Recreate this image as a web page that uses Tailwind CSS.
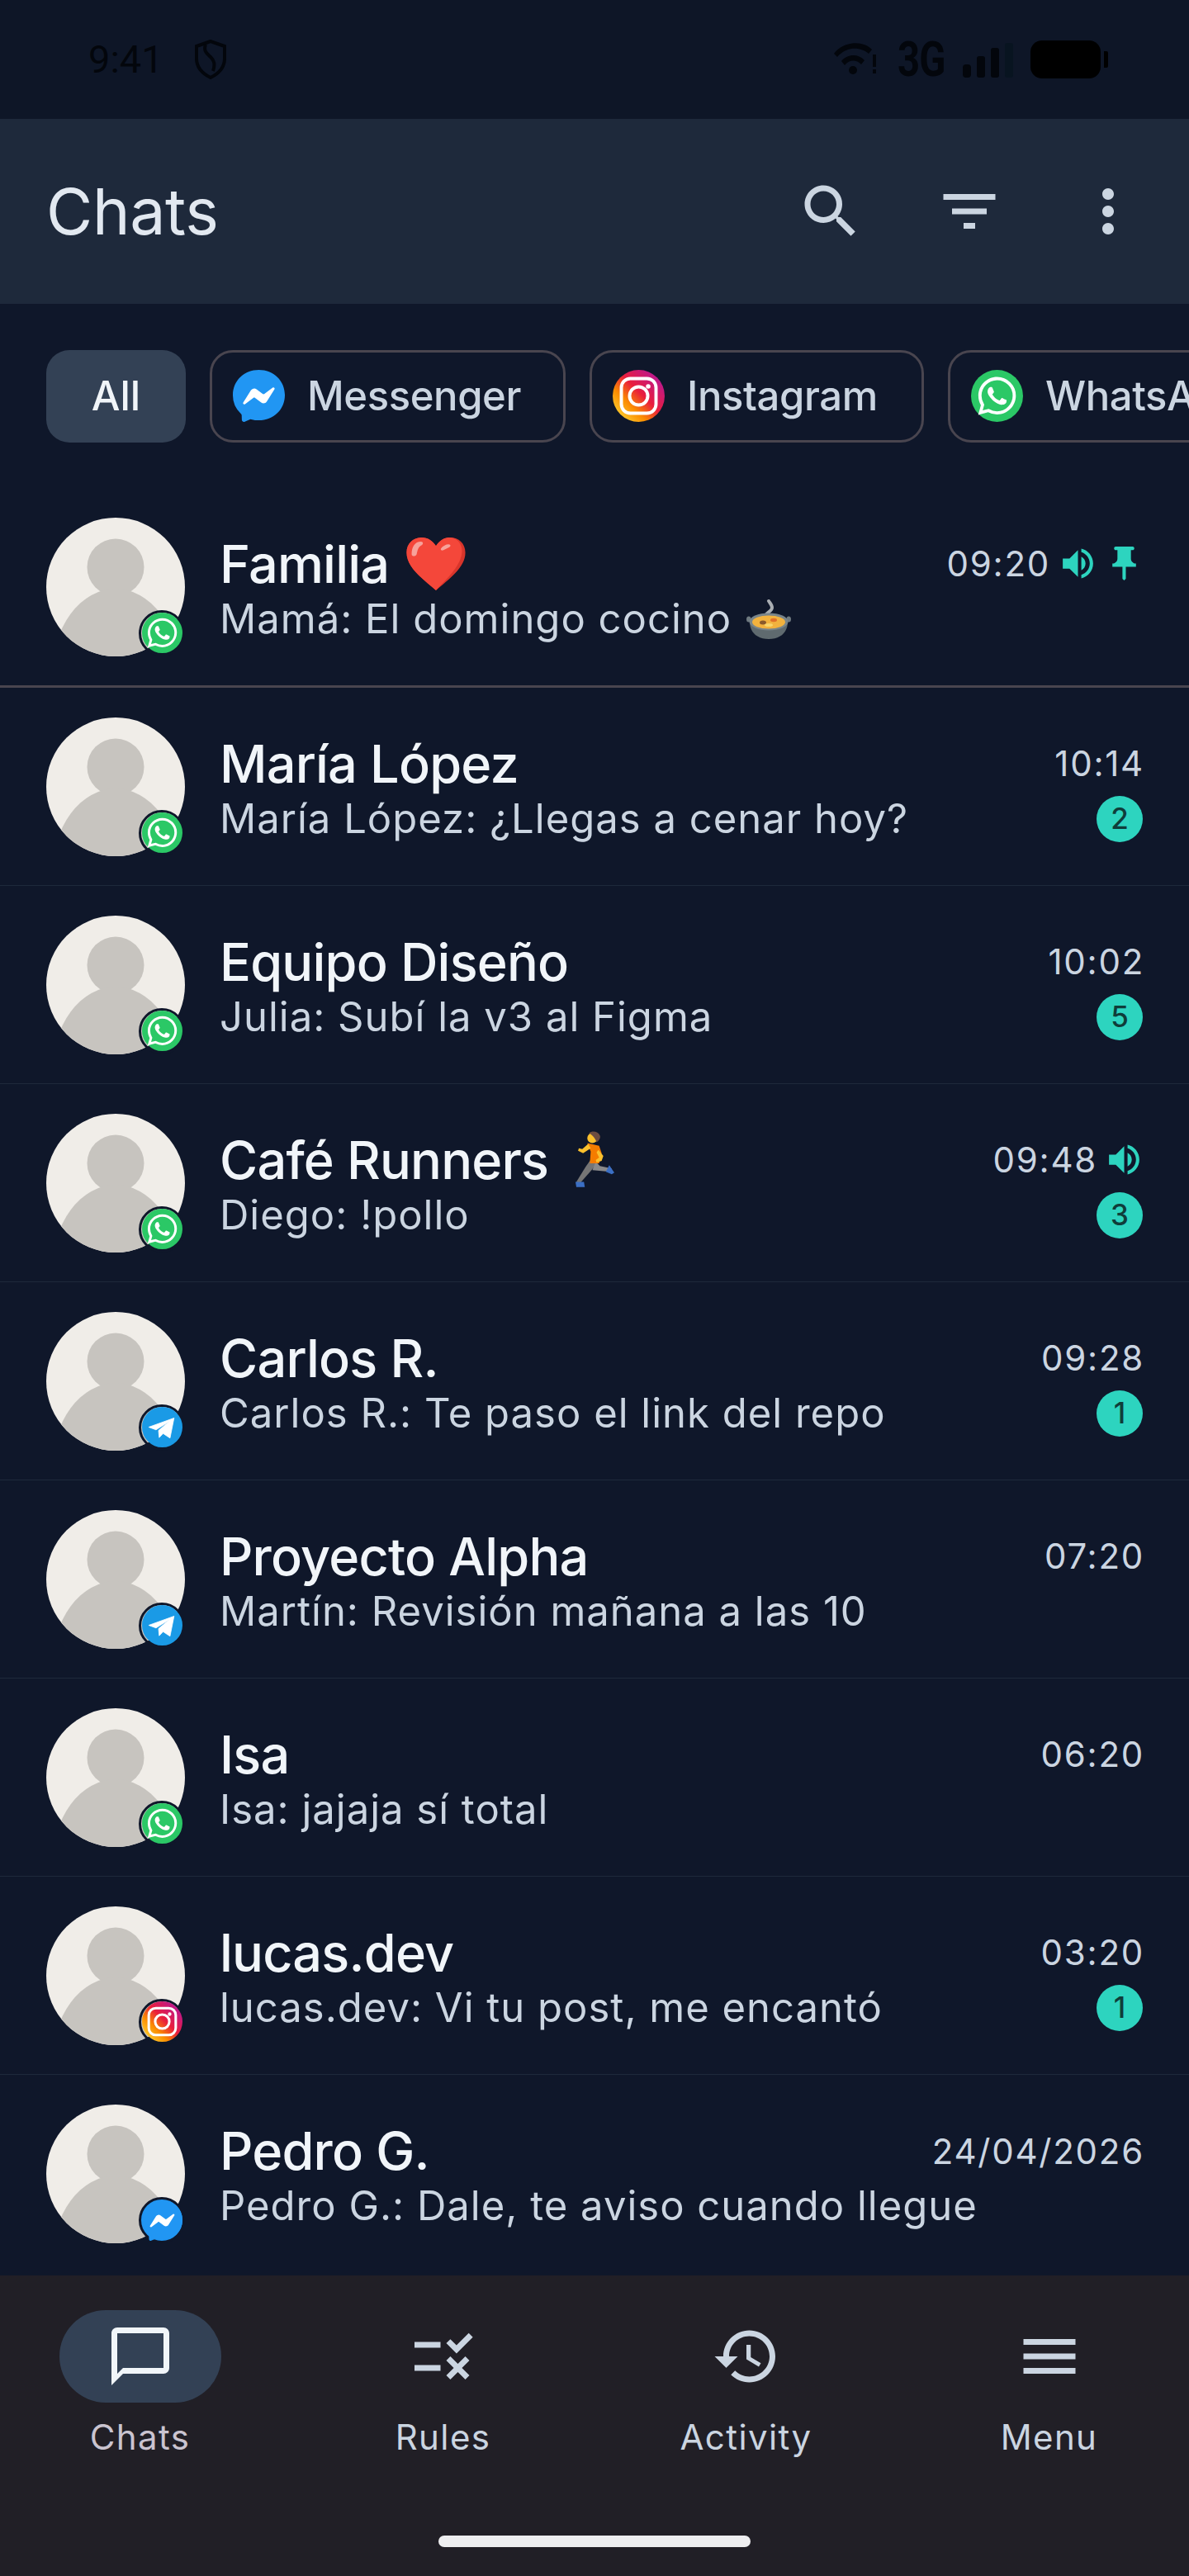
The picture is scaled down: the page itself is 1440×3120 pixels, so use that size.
<!DOCTYPE html>
<html>
<head>
<meta charset="utf-8">
<script src="https://cdn.jsdelivr.net/npm/@tailwindcss/browser@4"></script>
</head>
<body class="bg-[#0f172a] font-['Inter',sans-serif]">
<svg width="0" height="0" class="absolute">
  <defs>
    <linearGradient id="ig" x1="0.1" y1="0.95" x2="0.95" y2="0.1">
      <stop offset="0" stop-color="#fdd835"/><stop offset="0.3" stop-color="#fb8c00"/><stop offset="0.55" stop-color="#e91e3c"/><stop offset="1" stop-color="#b5179e"/>
    </linearGradient>
    <symbol id="wa" viewBox="-4.5 -4.5 33 33"><circle cx="12" cy="12" r="16.5" fill="#2bc866"/><path fill="#fff" d="M17.472 14.382c-.297-.149-1.758-.867-2.03-.967-.273-.099-.471-.148-.67.15-.197.297-.767.966-.94 1.164-.173.199-.347.223-.644.075-.297-.15-1.255-.463-2.39-1.475-.883-.788-1.48-1.761-1.653-2.059-.173-.297-.018-.458.13-.606.134-.133.298-.347.446-.52.149-.174.198-.298.298-.497.099-.198.05-.371-.025-.52-.075-.149-.669-1.612-.916-2.207-.242-.579-.487-.5-.669-.51-.173-.008-.371-.01-.57-.01-.198 0-.52.074-.792.372-.272.297-1.04 1.016-1.04 2.479 0 1.462 1.065 2.875 1.213 3.074.149.198 2.096 3.2 5.077 4.487.709.306 1.262.489 1.694.625.712.227 1.36.195 1.871.118.571-.085 1.758-.719 2.006-1.413.248-.694.248-1.289.173-1.413-.074-.124-.272-.198-.57-.347m-5.421 7.403h-.004a9.87 9.87 0 01-5.031-1.378l-.361-.214-3.741.982.998-3.648-.235-.374a9.86 9.86 0 01-1.51-5.26c.001-5.45 4.436-9.884 9.888-9.884 2.64 0 5.122 1.03 6.988 2.898a9.825 9.825 0 012.893 6.994c-.003 5.45-4.437 9.884-9.885 9.884m8.413-18.297A11.815 11.815 0 0012.05 0C5.495 0 .16 5.335.157 11.892c0 2.096.547 4.142 1.588 5.945L.057 24l6.305-1.654a11.882 11.882 0 005.683 1.448h.005c6.554 0 11.89-5.335 11.893-11.893a11.821 11.821 0 00-3.48-8.413Z"/></symbol>
    <symbol id="tg" viewBox="0 0 24 24"><circle cx="12" cy="12" r="12" fill="#1a9ae6"/><path fill="#fff" stroke="#fff" stroke-width=".4" stroke-linejoin="round" d="M4 12 19 6.6 16.6 18.5 12.5 15.8 10.2 18.2 9.8 14 16.5 8.5 8.3 13.6z"/></symbol>
    <symbol id="ms" viewBox="0 0 24 24"><path fill="#2196f3" d="M.001 11.639C.001 4.949 5.241 0 12.001 0S24 4.95 24 11.639c0 6.689-5.24 11.638-12 11.638-1.21 0-2.38-.16-3.47-.46a.96.96 0 00-.64.05l-2.39 1.05a.96.96 0 01-1.35-.85l-.07-2.14a.97.97 0 00-.32-.68A11.39 11.389 0 01.002 11.64z"/><path fill="#fff" d="M8.321 9.449l-3.52 5.6c-.35.53.32 1.139.82.75l3.79-2.87c.26-.2.6-.2.87 0l2.8 2.1c.84.63 2.04.4 2.6-.48l3.52-5.6c.35-.53-.32-1.13-.82-.75l-3.79 2.87c-.25.2-.6.2-.86 0l-2.8-2.1a1.8 1.8 0 00-2.61.48z"/></symbol>
    <symbol id="igc" viewBox="0 0 24 24"><circle cx="12" cy="12" r="12" fill="url(#ig)"/><rect x="4" y="4" width="16" height="16" rx="4.2" fill="none" stroke="#fff" stroke-width="1.5"/><circle cx="12" cy="12" r="4.2" fill="none" stroke="#fff" stroke-width="1.5"/><circle cx="16.4" cy="7.6" r="1.05" fill="#fff"/></symbol>
    <symbol id="avatar" viewBox="0 0 168 168"><circle cx="84" cy="84" r="84" fill="#f0ede8"/><clipPath id="avc"><circle cx="84" cy="84" r="84"/></clipPath><g clip-path="url(#avc)" fill="#c7c4bf"><circle cx="84" cy="60" r="34.5"/><ellipse cx="84" cy="190" rx="77" ry="104"/></g></symbol>
    <symbol id="vol" viewBox="0 0 24 24"><path fill="#2dd4bf" d="M3 9v6h4l5 5V4L7 9H3zm13.5 3c0-1.77-1.02-3.29-2.5-4.03v8.05c1.48-.73 2.5-2.25 2.5-4.02zM14 3.23v2.06c2.89.86 5 3.54 5 6.71s-2.11 5.85-5 6.71v2.06c4.01-.91 7-4.49 7-8.77s-2.99-7.86-7-8.77z"/></symbol>
  </defs>
</svg>

<div class="w-[1440px] h-[3120px] flex flex-col overflow-hidden">
  <!-- status bar -->
  <div class="h-[144px] bg-[#0e1627] flex items-start justify-between text-black relative">
    <div class="flex items-center gap-[37px] pl-[107px] pt-[48px]">
      <span class="font-['Roboto',sans-serif] text-[47px] leading-[48px] text-[#03060c]">9:41</span>
      <svg width="40" height="48" viewBox="0 0 40 48" fill="none" stroke="#03060c" stroke-width="4"><path d="M20 2 3 8v15c0 11 7 18 17 23 10-5 17-12 17-23V8z"/><path d="M14 6c-3 8 2 11 6 15 4 4 6 8 3 17"/></svg>
    </div>
    <div class="flex items-center pt-[49px] pr-[98px]">
      <svg width="54" height="40" viewBox="0 0 54 40" fill="#03060c"><path d="M0 13C12 -3 36 -3 46 8l-4 5C32 4 15 4 4 17z"/><path d="M9 22c8-9 20-9 28-1l-4 5c-6-6-14-6-20 1z"/><circle cx="23" cy="33" r="5"/><rect x="47" y="14" width="4" height="15"/><rect x="47" y="32" width="4" height="5"/></svg>
      <span class="ml-[23px] font-['Roboto',sans-serif] font-bold text-[59px] leading-[46px] tracking-[-1px] text-[#03060c] scale-x-[0.8] origin-left w-[60px] block">3G</span>
      <div class="ml-[19px] flex items-end gap-[7px] h-[44px]">
        <div class="w-[10px] h-[16px] bg-[#03060c] rounded-[4px]"></div>
        <div class="w-[10px] h-[26px] bg-[#03060c] rounded-[3px]"></div>
        <div class="w-[10px] h-[36px] bg-[#03060c] rounded-[3px]"></div>
        <div class="w-[10px] h-[42px] bg-[#081420] rounded-[3px]"></div>
      </div>
      <div class="ml-[21px] w-[85px] h-[46px] bg-black rounded-[14px]"></div>
      <div class="ml-[4px] w-[5px] h-[20px] bg-black rounded-r-[2px]"></div>
    </div>
  </div>

  <!-- app bar -->
  <div class="h-[224px] bg-[#1e293b] flex items-center justify-between pl-[56px] pr-[14px]">
    <h1 class="text-[77px] leading-none font-normal tracking-[-0.3px] text-[#e2e8f0]">Chats</h1>
    <div class="flex text-[#cbd5e1]">
      <div class="w-[168px] h-[168px] flex items-center justify-center"><svg width="84" height="84" viewBox="0 0 24 24" fill="currentColor"><path d="M15.5 14h-.79l-.28-.27C15.41 12.59 16 11.11 16 9.5 16 5.91 13.09 3 9.5 3S3 5.91 3 9.5 5.91 16 9.5 16c1.61 0 3.09-.59 4.23-1.57l.27.28v.79l5 4.99L20.49 19l-4.99-5zm-6 0C7.01 14 5 11.99 5 9.5S7.01 5 9.5 5 14 7.01 14 9.5 11.99 14 9.5 14z"/></svg></div>
      <div class="w-[168px] h-[168px] flex items-center justify-center"><svg width="84" height="84" viewBox="0 0 24 24" fill="currentColor"><path d="M10 18h4v-2h-4v2zM3 6v2h18V6H3zm3 7h12v-2H6v2z"/></svg></div>
      <div class="w-[168px] h-[168px] flex items-center justify-center"><svg width="84" height="84" viewBox="0 0 24 24" fill="currentColor"><path d="M12 8c1.1 0 2-.9 2-2s-.9-2-2-2-2 .9-2 2 .9 2 2 2zm0 2c-1.1 0-2 .9-2 2s.9 2 2 2 2-.9 2-2-.9-2-2-2zm0 6c-1.1 0-2 .9-2 2s.9 2 2 2 2-.9 2-2-.9-2-2-2z"/></svg></div>
    </div>
  </div>

  <!-- filter chips -->
  <div class="h-[223px] flex items-center gap-[29px] pl-[56px] overflow-hidden shrink-0">
    <div class="shrink-0 w-[169px] h-[112px] rounded-[28px] bg-[#334155] flex items-center justify-center text-[49px] text-[#f1f5f9] font-medium">All</div>
    <div class="shrink-0 w-[431px] h-[112px] rounded-[28px] border-[3.5px] border-[#49454f] flex items-center pl-[25px] gap-[27px] text-[49px] tracking-[-0.4px] font-medium text-[#cbd5e1]"><svg class="shrink-0" width="63" height="63"><use href="#ms"/></svg><span>Messenger</span></div>
    <div class="shrink-0 w-[405px] h-[112px] rounded-[28px] border-[3.5px] border-[#49454f] flex items-center pl-[25px] gap-[27px] text-[49px] tracking-[-0.4px] font-medium text-[#cbd5e1]"><svg class="shrink-0" width="63" height="63"><use href="#igc"/></svg><span>Instagram</span></div>
    <div class="shrink-0 w-[430px] h-[112px] rounded-[28px] border-[3.5px] border-[#49454f] flex items-center pl-[25px] gap-[27px] text-[49px] tracking-[-0.4px] font-medium text-[#cbd5e1]"><svg class="shrink-0" width="63" height="63"><use href="#wa"/></svg><span>WhatsApp</span></div>
  </div>

  <!-- list -->
  <div class="flex-1 overflow-hidden">
    <!-- row 1 -->
    <div class="h-[242px] border-b-[3px] border-[#49454f] flex items-center px-[56px] gap-[42px]">
      <div class="relative w-[168px] h-[168px] shrink-0"><svg width="168" height="168"><use href="#avatar"/></svg><div class="absolute right-0 bottom-0 w-[56px] h-[56px] rounded-full border-[3.5px] border-[#0f172a] flex items-center justify-center"><svg width="49" height="49"><use href="#wa"/></svg></div></div>
      <div class="flex-1 min-w-0 flex flex-col pt-[8px]">
        <div class="flex items-center justify-between h-[70px]"><div class="flex items-center gap-[21px]"><span class="text-[63px] leading-[70px] tracking-[-0.8px] font-medium text-[#f1f5f9]">Familia</span><svg width="72" height="64" viewBox="0 0 70 63"><path fill="#d8352b" d="M35 63C20 50 0 36 0 18 0 7 8 0 18 0c7 0 13 4 17 10C39 4 45 0 52 0c10 0 18 7 18 18 0 18-20 32-35 45z"/><path fill="#f4473a" d="M35 63C20 50 0 36 0 18 0 7 8 0 18 0c7 0 13 4 17 10C39 4 45 0 50 0c9 0 16 6 16 16 0 17-18 33-31 47z"/><path fill="#f7a29a" d="M6 20C6 11 10 5 17 5c3 0 3 3 1 4-4 2-5 6-6 11-1 3-6 3-6 0zM41 13c2-3 6-5 9-5 3 0 3 3 0 4-2 1-4 2-6 3-2 1-4 0-3-2z"/></svg></div><div class="flex items-center text-[42px] tracking-[1.75px] text-[#cbd5e1] -mr-[2px]"><span>09:20</span><svg class="ml-[9px]" width="49" height="49"><use href="#vol"/></svg><svg class="ml-[7px]" width="49" height="49" viewBox="0 0 24 24"><path fill="#2dd4bf" d="M16 9V4h1c.55 0 1-.45 1-1s-.45-1-1-1H7c-.55 0-1 .45-1 1s.45 1 1 1h1v5c0 1.66-1.34 3-3 3v2h5.97v7l1 1 1-1v-7H19v-2c-1.66 0-3-1.34-3-3z"/></svg></div></div>
        <div class="flex items-center h-[64px]"><span class="text-[49px] leading-[64px] tracking-[1px] text-[#cbd5e1]">Mamá: El domingo cocino</span><svg class="ml-[18px]" width="54" height="48" viewBox="0 0 54 48"><path fill="none" stroke="#a9aeb3" stroke-width="4" stroke-linecap="round" d="M23 22c-2-5 8-7 8-12 0-3-2-5-4-8"/><ellipse cx="2.8" cy="24" rx="2.8" ry="3.5" fill="#6f7a80"/><ellipse cx="51.2" cy="24" rx="2.8" ry="3.5" fill="#6f7a80"/><path fill="#5f6a6f" d="M4 27h46c0 13-9 21-23 21S4 40 4 27z"/><ellipse cx="27" cy="27" rx="23.5" ry="10.5" fill="#78848a"/><ellipse cx="27" cy="27.5" rx="20" ry="8" fill="#f2b23e"/><ellipse cx="20" cy="28" rx="4" ry="2.5" fill="#8a5a2b"/><ellipse cx="33" cy="25" rx="4" ry="2.2" fill="#e0702a"/><ellipse cx="27" cy="31" rx="5" ry="2" fill="#f7d56b"/></svg></div>
      </div>
    </div>

    <!-- row 2 -->
    <div class="h-[240px] border-b border-[#1e293b] flex items-center px-[56px] gap-[42px]">
      <div class="relative w-[168px] h-[168px] shrink-0"><svg width="168" height="168"><use href="#avatar"/></svg><div class="absolute right-0 bottom-0 w-[56px] h-[56px] rounded-full border-[3.5px] border-[#0f172a] flex items-center justify-center"><svg width="49" height="49"><use href="#wa"/></svg></div></div>
      <div class="flex-1 min-w-0 flex flex-col pt-[8px]">
        <div class="flex items-center justify-between h-[70px]"><span class="text-[63px] leading-[70px] tracking-[-0.8px] font-medium text-[#f1f5f9]">María López</span><span class="text-[42px] tracking-[1.75px] text-[#cbd5e1] -mr-[2px]">10:14</span></div>
        <div class="flex items-center justify-between h-[64px]"><span class="text-[49px] leading-[64px] tracking-[1px] text-[#cbd5e1]">María López: ¿Llegas a cenar hoy?</span><span class="w-[56px] h-[56px] rounded-full bg-[#2dd4bf] text-[#0f3d3a] text-[35px] font-medium flex items-center justify-center">2</span></div>
      </div>
    </div>

    <!-- row 3 -->
    <div class="h-[240px] border-b border-[#1e293b] flex items-center px-[56px] gap-[42px]">
      <div class="relative w-[168px] h-[168px] shrink-0"><svg width="168" height="168"><use href="#avatar"/></svg><div class="absolute right-0 bottom-0 w-[56px] h-[56px] rounded-full border-[3.5px] border-[#0f172a] flex items-center justify-center"><svg width="49" height="49"><use href="#wa"/></svg></div></div>
      <div class="flex-1 min-w-0 flex flex-col pt-[8px]">
        <div class="flex items-center justify-between h-[70px]"><span class="text-[63px] leading-[70px] tracking-[-0.8px] font-medium text-[#f1f5f9]">Equipo Diseño</span><span class="text-[42px] tracking-[1.75px] text-[#cbd5e1] -mr-[2px]">10:02</span></div>
        <div class="flex items-center justify-between h-[64px]"><span class="text-[49px] leading-[64px] tracking-[1px] text-[#cbd5e1]">Julia: Subí la v3 al Figma</span><span class="w-[56px] h-[56px] rounded-full bg-[#2dd4bf] text-[#0f3d3a] text-[35px] font-medium flex items-center justify-center">5</span></div>
      </div>
    </div>

    <!-- row 4 -->
    <div class="h-[240px] border-b border-[#1e293b] flex items-center px-[56px] gap-[42px]">
      <div class="relative w-[168px] h-[168px] shrink-0"><svg width="168" height="168"><use href="#avatar"/></svg><div class="absolute right-0 bottom-0 w-[56px] h-[56px] rounded-full border-[3.5px] border-[#0f172a] flex items-center justify-center"><svg width="49" height="49"><use href="#wa"/></svg></div></div>
      <div class="flex-1 min-w-0 flex flex-col pt-[8px]">
        <div class="flex items-center justify-between h-[70px]"><div class="flex items-center gap-[33px]"><span class="text-[63px] leading-[70px] tracking-[-0.8px] font-medium text-[#f1f5f9]">Café Runners</span><svg width="48" height="70" viewBox="0 0 47 68"><path d="M22 28 12 42 1 60l4 2 14-16 8-10z" fill="#757575"/><path d="M24 36 20 46l22 2 1-4-14-3z" fill="#8a8a8a"/><path d="M0 60h10l1 6H1z" fill="#3b6fc4"/><path d="M40 40l6 9-3 2-7-3z" fill="#3b6fc4"/><path d="M14 14l14 3 3 9-3 12H17l1-14z" fill="#f57c00"/><path d="M15 15 8 21l-4-1-1 3 6 3 9-6zM27 22l6 7-2 6-6 2-1-3 4-3-3-6z" fill="#fbc02d"/><circle cx="20" cy="8" r="6" fill="#fbc02d"/><path d="M16 2c4-3 11-2 13 3 1 3-1 6-4 8-1-3-3-7-9-11z" fill="#6d4c41"/></svg></div><div class="flex items-center -mr-[2px]"><span class="text-[42px] tracking-[1.75px] text-[#cbd5e1]">09:48</span><svg class="ml-[8px]" width="49" height="49"><use href="#vol"/></svg></div></div>
        <div class="flex items-center justify-between h-[64px]"><span class="text-[49px] leading-[64px] tracking-[1px] text-[#cbd5e1]">Diego: !pollo</span><span class="w-[56px] h-[56px] rounded-full bg-[#2dd4bf] text-[#0f3d3a] text-[35px] font-medium flex items-center justify-center">3</span></div>
      </div>
    </div>

    <!-- row 5 -->
    <div class="h-[240px] border-b border-[#1e293b] flex items-center px-[56px] gap-[42px]">
      <div class="relative w-[168px] h-[168px] shrink-0"><svg width="168" height="168"><use href="#avatar"/></svg><div class="absolute right-0 bottom-0 w-[56px] h-[56px] rounded-full border-[3.5px] border-[#0f172a] flex items-center justify-center"><svg width="49" height="49"><use href="#tg"/></svg></div></div>
      <div class="flex-1 min-w-0 flex flex-col pt-[8px]">
        <div class="flex items-center justify-between h-[70px]"><span class="text-[63px] leading-[70px] tracking-[-0.8px] font-medium text-[#f1f5f9]">Carlos R.</span><span class="text-[42px] tracking-[1.75px] text-[#cbd5e1] -mr-[2px]">09:28</span></div>
        <div class="flex items-center justify-between h-[64px]"><span class="text-[49px] leading-[64px] tracking-[1px] text-[#cbd5e1]">Carlos R.: Te paso el link del repo</span><span class="w-[56px] h-[56px] rounded-full bg-[#2dd4bf] text-[#0f3d3a] text-[35px] font-medium flex items-center justify-center">1</span></div>
      </div>
    </div>

    <!-- row 6 -->
    <div class="h-[240px] border-b border-[#1e293b] flex items-center px-[56px] gap-[42px]">
      <div class="relative w-[168px] h-[168px] shrink-0"><svg width="168" height="168"><use href="#avatar"/></svg><div class="absolute right-0 bottom-0 w-[56px] h-[56px] rounded-full border-[3.5px] border-[#0f172a] flex items-center justify-center"><svg width="49" height="49"><use href="#tg"/></svg></div></div>
      <div class="flex-1 min-w-0 flex flex-col pt-[8px]">
        <div class="flex items-center justify-between h-[70px]"><span class="text-[63px] leading-[70px] tracking-[-0.8px] font-medium text-[#f1f5f9]">Proyecto Alpha</span><span class="text-[42px] tracking-[1.75px] text-[#cbd5e1] -mr-[2px]">07:20</span></div>
        <div class="flex items-center h-[64px]"><span class="text-[49px] leading-[64px] tracking-[1px] text-[#cbd5e1]">Martín: Revisión mañana a las 10</span></div>
      </div>
    </div>

    <!-- row 7 -->
    <div class="h-[240px] border-b border-[#1e293b] flex items-center px-[56px] gap-[42px]">
      <div class="relative w-[168px] h-[168px] shrink-0"><svg width="168" height="168"><use href="#avatar"/></svg><div class="absolute right-0 bottom-0 w-[56px] h-[56px] rounded-full border-[3.5px] border-[#0f172a] flex items-center justify-center"><svg width="49" height="49"><use href="#wa"/></svg></div></div>
      <div class="flex-1 min-w-0 flex flex-col pt-[8px]">
        <div class="flex items-center justify-between h-[70px]"><span class="text-[63px] leading-[70px] tracking-[-0.8px] font-medium text-[#f1f5f9]">Isa</span><span class="text-[42px] tracking-[1.75px] text-[#cbd5e1] -mr-[2px]">06:20</span></div>
        <div class="flex items-center h-[64px]"><span class="text-[49px] leading-[64px] tracking-[1px] text-[#cbd5e1]">Isa: jajaja sí total</span></div>
      </div>
    </div>

    <!-- row 8 -->
    <div class="h-[240px] border-b border-[#1e293b] flex items-center px-[56px] gap-[42px]">
      <div class="relative w-[168px] h-[168px] shrink-0"><svg width="168" height="168"><use href="#avatar"/></svg><div class="absolute right-0 bottom-0 w-[56px] h-[56px] rounded-full border-[3.5px] border-[#0f172a] flex items-center justify-center"><svg width="49" height="49"><use href="#igc"/></svg></div></div>
      <div class="flex-1 min-w-0 flex flex-col pt-[8px]">
        <div class="flex items-center justify-between h-[70px]"><span class="text-[63px] leading-[70px] tracking-[-0.8px] font-medium text-[#f1f5f9]">lucas.dev</span><span class="text-[42px] tracking-[1.75px] text-[#cbd5e1] -mr-[2px]">03:20</span></div>
        <div class="flex items-center justify-between h-[64px]"><span class="text-[49px] leading-[64px] tracking-[1px] text-[#cbd5e1]">lucas.dev: Vi tu post, me encantó</span><span class="w-[56px] h-[56px] rounded-full bg-[#2dd4bf] text-[#0f3d3a] text-[35px] font-medium flex items-center justify-center">1</span></div>
      </div>
    </div>

    <!-- row 9 -->
    <div class="h-[240px] flex items-center px-[56px] gap-[42px]">
      <div class="relative w-[168px] h-[168px] shrink-0"><svg width="168" height="168"><use href="#avatar"/></svg><div class="absolute right-0 bottom-0 w-[56px] h-[56px] rounded-full bg-[#2196f3] border-[3.5px] border-[#0f172a] flex items-center justify-center"><svg width="49" height="49"><use href="#ms"/></svg></div></div>
      <div class="flex-1 min-w-0 flex flex-col pt-[8px]">
        <div class="flex items-center justify-between h-[70px]"><span class="text-[63px] leading-[70px] tracking-[-0.8px] font-medium text-[#f1f5f9]">Pedro G.</span><span class="text-[42px] tracking-[1.75px] text-[#cbd5e1] -mr-[2px]">24/04/2026</span></div>
        <div class="flex items-center h-[64px]"><span class="text-[49px] leading-[64px] tracking-[1px] text-[#cbd5e1]">Pedro G.: Dale, te aviso cuando llegue</span></div>
      </div>
    </div>
  </div>

  <!-- bottom nav -->
  <div class="h-[364px] shrink-0 bg-[#211f26] relative grid grid-cols-4 gap-[28px] pt-[42px]">
    <div class="flex flex-col items-center">
      <div class="w-[196px] h-[112px] rounded-full bg-[#334155] flex items-center justify-center"><svg width="84" height="84" viewBox="0 0 24 24" fill="#f1f5f9"><path d="M20 2H4c-1.1 0-2 .9-2 2v18l4-4h14c1.1 0 2-.9 2-2V4c0-1.1-.9-2-2-2zm0 14H6l-2 2V4h16v12z"/></svg></div>
      <span class="mt-[14px] text-[42px] leading-[56px] tracking-[1.4px] font-normal text-[#cac4d0]">Chats</span>
    </div>
    <div class="flex flex-col items-center">
      <div class="w-[196px] h-[112px] flex items-center justify-center"><svg width="84" height="84" viewBox="0 0 24 24" fill="#cbd5e1"><path d="M16.54 11L13 7.46l1.41-1.41 2.12 2.12 4.24-4.24 1.41 1.41L16.54 11zM11 7H2v2h9V7zm10 6.41L19.59 12 17 14.59 14.41 12 13 13.41 15.59 16 13 18.59 14.41 20 17 17.41 19.59 20 21 18.59 18.41 16 21 13.41zM11 15H2v2h9v-2z"/></svg></div>
      <span class="mt-[14px] text-[42px] leading-[56px] tracking-[1.4px] font-normal text-[#cbd5e1]">Rules</span>
    </div>
    <div class="flex flex-col items-center">
      <div class="w-[196px] h-[112px] flex items-center justify-center"><svg width="84" height="84" viewBox="0 0 24 24" fill="#cbd5e1"><path d="M13 3c-4.97 0-9 4.03-9 9H1l3.89 3.89.07.14L9 12H6c0-3.87 3.13-7 7-7s7 3.13 7 7-3.13 7-7 7c-1.93 0-3.68-.79-4.94-2.06l-1.42 1.42C8.27 19.99 10.51 21 13 21c4.97 0 9-4.03 9-9s-4.03-9-9-9zm-1 5v5l4.28 2.54.72-1.21-3.5-2.08V8H12z"/></svg></div>
      <span class="mt-[14px] text-[42px] leading-[56px] tracking-[1.4px] font-normal text-[#cbd5e1]">Activity</span>
    </div>
    <div class="flex flex-col items-center">
      <div class="w-[196px] h-[112px] flex items-center justify-center"><svg width="84" height="84" viewBox="0 0 24 24" fill="#cbd5e1"><path d="M3 18h18v-2H3v2zm0-5h18v-2H3v2zm0-7v2h18V6H3z"/></svg></div>
      <span class="mt-[14px] text-[42px] leading-[56px] tracking-[1.4px] font-normal text-[#cbd5e1]">Menu</span>
    </div>
    <div class="absolute left-[531px] top-[315px] w-[378px] h-[14px] rounded-full bg-[#eeeef0]"></div>
  </div>
</div>
</body>
</html>
